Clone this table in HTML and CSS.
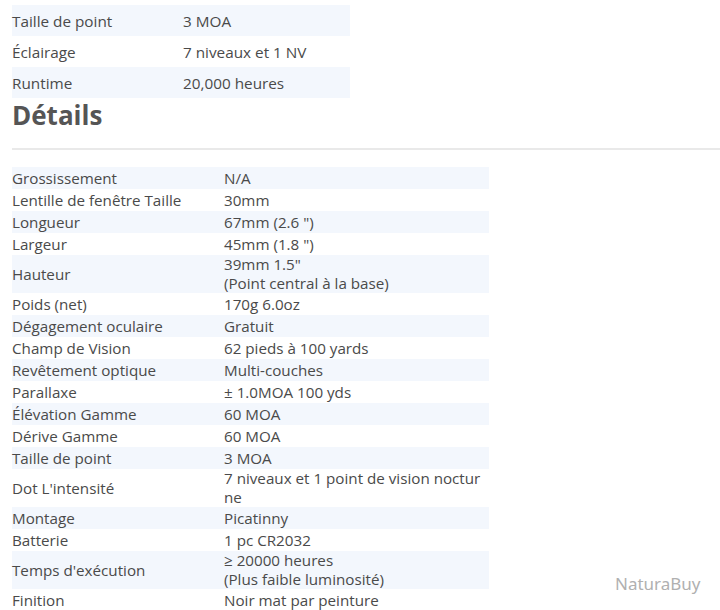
FILE: index.html
```html
<!DOCTYPE html>
<html lang="fr">
<head>
  <meta charset="UTF-8" />
  <title>Fiche technique</title>
  <link rel="stylesheet" href="styles.css">
</head>
<body>

  <table class="specs-short">
    <tr><td>Taille de point</td><td>3 MOA</td></tr>
    <tr><td>Éclairage</td><td>7 niveaux et 1 NV</td></tr>
    <tr><td>Runtime</td><td>20,000 heures</td></tr>
  </table>

  <h2 class="section-title">Détails</h2>
  <hr class="section-rule">

  <table class="specs-full">
    <tr><td>Grossissement</td><td>N/A</td></tr>
    <tr><td>Lentille de fenêtre Taille</td><td>30mm</td></tr>
    <tr><td>Longueur</td><td>67mm (2.6 ")</td></tr>
    <tr><td>Largeur</td><td>45mm (1.8 ")</td></tr>
    <tr><td>Hauteur</td><td>39mm 1.5"<br>(Point central à la base)</td></tr>
    <tr><td>Poids (net)</td><td>170g 6.0oz</td></tr>
    <tr><td>Dégagement oculaire</td><td>Gratuit</td></tr>
    <tr><td>Champ de Vision</td><td>62 pieds à 100 yards</td></tr>
    <tr><td>Revêtement optique</td><td>Multi-couches</td></tr>
    <tr><td>Parallaxe</td><td>± 1.0MOA 100 yds</td></tr>
    <tr><td>Élévation Gamme</td><td>60 MOA</td></tr>
    <tr><td>Dérive Gamme</td><td>60 MOA</td></tr>
    <tr><td>Taille de point</td><td>3 MOA</td></tr>
    <tr><td>Dot L'intensité</td><td>7 niveaux et 1 point de vision noctur<br>ne</td></tr>
    <tr><td>Montage</td><td>Picatinny</td></tr>
    <tr><td>Batterie</td><td>1 pc CR2032</td></tr>
    <tr><td>Temps d'exécution</td><td>≥ 20000 heures<br>(Plus faible luminosité)</td></tr>
    <tr><td>Finition</td><td>Noir mat par peinture</td></tr>
  </table>

  <div class="watermark">NaturaBuy</div>

</body>
</html>
```

FILE: styles.css
```css
body {
  margin: 0;
  padding: 5px 0 0 12px;
  font-family: 'Open Sans', sans-serif;
  color: #4a4a4a;
  background: #fff;
  overflow: hidden;
}

table {
  border-collapse: collapse;
}

.specs-short {
  width: 338px;
  font-size: 15.3px;
}

.specs-short td {
  height: 31px;
  padding: 0;
  vertical-align: middle;
}

.specs-short td:first-child {
  width: 171px;
}

.specs-short tr:nth-child(odd) {
  background: #f3f7fd;
}

.section-title {
  margin: 0;
  font-size: 26px;
  line-height: 34px;
  font-weight: 700;
  color: #555;
}

.section-rule {
  border: none;
  border-top: 2px solid #e9e9e9;
  margin: 16px 0 17px;
}

.specs-full {
  width: 477px;
  font-size: 15.2px;
  line-height: 19px;
}

.specs-full td {
  height: 22px;
  padding: 0;
  vertical-align: middle;
}

.specs-full td:first-child {
  width: 212px;
}

.specs-full tr:nth-child(odd) {
  background: #f3f7fd;
}

.watermark {
  position: absolute;
  left: 615px;
  top: 572px;
  font-family: 'Noto Sans', sans-serif;
  font-size: 17px;
  color: #b0b0b0;
}
```
